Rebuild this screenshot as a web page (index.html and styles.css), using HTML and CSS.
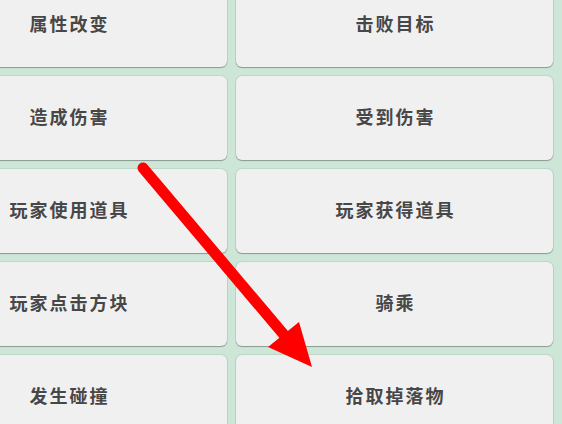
FILE: index.html
```html
<!DOCTYPE html>
<html lang="zh">
<head>
<meta charset="utf-8">
<title>事件</title>
<link rel="stylesheet" href="styles.css">
</head>
<body>
<div class="grid">
  <div class="card">属性改变</div>
  <div class="card">击败目标</div>
  <div class="card">造成伤害</div>
  <div class="card">受到伤害</div>
  <div class="card">玩家使用道具</div>
  <div class="card">玩家获得道具</div>
  <div class="card">玩家点击方块</div>
  <div class="card">骑乘</div>
  <div class="card">发生碰撞</div>
  <div class="card">拾取掉落物</div>
</div>
<svg class="arrow" width="562" height="424" viewBox="0 0 562 424">
  <line x1="143" y1="168" x2="285" y2="336" stroke="#ff0000" stroke-width="11" stroke-linecap="round"/>
  <polygon points="312,367 268,347 299,322" fill="#ff0000"/>
</svg>
</body>
</html>
```
FILE: styles.css
```css
html, body {
  margin: 0;
  padding: 0;
  width: 562px;
  height: 424px;
  overflow: hidden;
  background: #cde6d7;
}
body {
  position: relative;
  font-family: "Noto Sans CJK SC", "Noto Sans", sans-serif;
}
.grid {
  display: grid;
  grid-template-columns: 317px 317px;
  grid-auto-rows: 84px;
  column-gap: 9px;
  row-gap: 9px;
  margin-left: -90px;
  margin-top: -17px;
}
.card {
  background: #f0f0f0;
  border-radius: 6px;
  box-shadow: 0 1px 1px rgba(0, 0, 0, 0.28), 0 0 0 1px rgba(90, 110, 100, 0.12);
  display: flex;
  align-items: center;
  justify-content: center;
  padding-bottom: 5px;
  padding-left: 2px;
  box-sizing: border-box;
  font-size: 18px;
  font-weight: 700;
  letter-spacing: 2px;
  color: #474747;
}
.arrow {
  position: absolute;
  left: 0;
  top: 0;
}
```
